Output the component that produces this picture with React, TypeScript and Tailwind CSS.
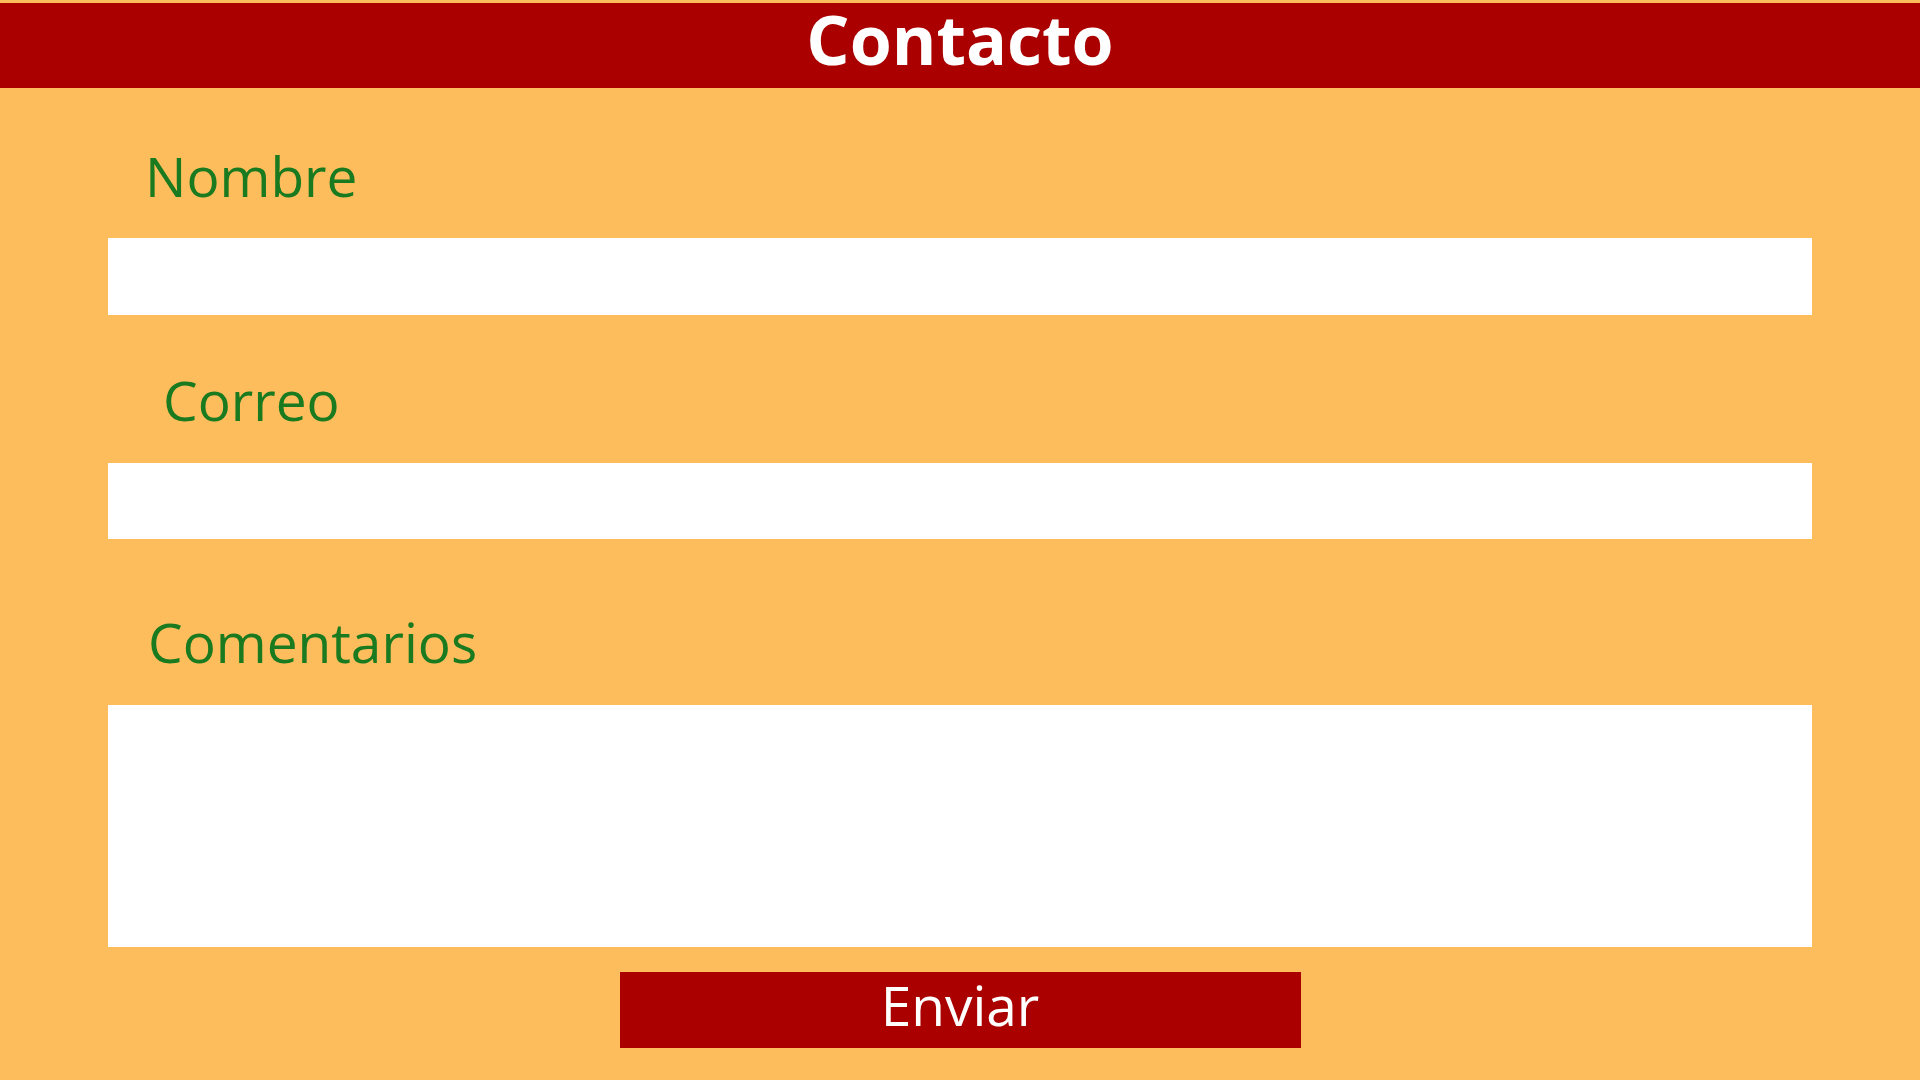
import React from 'react';

const labelClass = "text-[55px] leading-none text-[#1a7a1f] font-['Open_Sans',sans-serif]";

const App: React.FC = () => {
  return (
    <div className="min-h-screen w-full bg-[#fdbd5c] pt-[3px] font-['Open_Sans',sans-serif]">
      {/* Header */}
      <header className="h-[85px] bg-[#aa0000] flex justify-center pt-[2px]">
        <h1 className="text-[68px] leading-none font-bold text-white">Contacto</h1>
      </header>

      {/* Form */}
      <form className="flex flex-col px-[108px]" onSubmit={(e) => e.preventDefault()}>
        <label className={`${labelClass} mt-[60px] pl-[37px]`}>Nombre</label>
        <input type="text" className="mt-[35px] h-[77px] w-full bg-white outline-none" />

        <label className={`${labelClass} mt-[57px] pl-[55px]`}>Correo</label>
        <input type="email" className="mt-[36px] h-[76px] w-full bg-white outline-none" />

        <label className={`${labelClass} mt-[75px] pl-[40px]`}>Comentarios</label>
        <textarea className="mt-[36px] h-[242px] w-full bg-white outline-none resize-none" />

        <div className="flex justify-center mt-[25px]">
          <button
            type="submit"
            className="w-[681px] h-[76px] bg-[#aa0000] flex justify-center items-start pt-[5px]"
          >
            <span className="text-[55px] leading-none text-white">Enviar</span>
          </button>
        </div>
      </form>
    </div>
  );
};

export default App;
